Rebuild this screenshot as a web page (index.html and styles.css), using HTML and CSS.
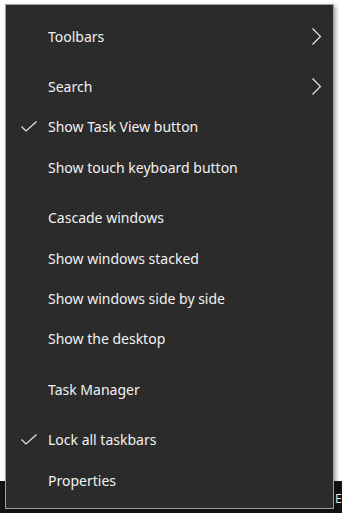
FILE: index.html
```html
<!DOCTYPE html>
<html lang="en">

<head>
    <meta charset="UTF-8">
    <meta name="viewport" content="width=device-width, initial-scale=1.0">
    <title>Taskbar menu</title>
    <link rel="stylesheet" href="styles.css">
</head>

<body>
    <div class="desktop">
        <ul class="menu">
            <li class="item">Toolbars<span class="chev"><svg width="9" height="17" viewBox="0 0 9 17"><path d="M0.5 0.5 L8.5 8.5 L0.5 16.5" fill="none" stroke="#f0f0f0" stroke-width="1.1"/></svg></span></li>
            <li class="sep"></li>
            <li class="item">Search<span class="chev"><svg width="9" height="17" viewBox="0 0 9 17"><path d="M0.5 0.5 L8.5 8.5 L0.5 16.5" fill="none" stroke="#f0f0f0" stroke-width="1.1"/></svg></span></li>
            <li class="item"><span class="check"><svg width="16" height="11" viewBox="0 0 16 11"><path d="M0.5 5.5 L5 10 L15.5 0.5" fill="none" stroke="#e8e8e8" stroke-width="1.1"/></svg></span>Show Task View button</li>
            <li class="item">Show touch keyboard button</li>
            <li class="sep"></li>
            <li class="item">Cascade windows</li>
            <li class="item">Show windows stacked</li>
            <li class="item">Show windows side by side</li>
            <li class="item">Show the desktop</li>
            <li class="sep"></li>
            <li class="item">Task Manager</li>
            <li class="sep"></li>
            <li class="item"><span class="check"><svg width="16" height="11" viewBox="0 0 16 11"><path d="M0.5 5.5 L5 10 L15.5 0.5" fill="none" stroke="#e8e8e8" stroke-width="1.1"/></svg></span>Lock all taskbars</li>
            <li class="item">Properties</li>
        </ul>
        <div class="taskbar">
            <span class="tray">E</span>
        </div>
    </div>
</body>

</html>
```

FILE: styles.css
```css
html, body {
    margin: 0;
    padding: 0;
    background-color: #ffffff;
}

.desktop {
    position: relative;
    width: 342px;
    height: 513px;
    overflow: hidden;
}

.taskbar {
    position: absolute;
    left: 0;
    top: 481px;
    width: 342px;
    height: 32px;
    background-color: #141414;
}

.tray {
    position: absolute;
    left: 335px;
    top: 9px;
    color: #ffffff;
    font-family: "Noto Sans", sans-serif;
    font-size: 12px;
}

/* the context menu itself sits above the taskbar */
.menu {
    position: absolute;
    left: 5px;
    top: 4px;
    z-index: 2;
    width: 329px;
    height: 505px;
    margin: 0;
    padding: 11px 0 6px 0;
    box-sizing: border-box;
    list-style: none;
    background-color: #2b2b2b;
    border: 1px solid #a0a0a0;
    box-shadow: 2px 2px 4px rgba(0, 0, 0, 0.35);
    font-family: "Noto Sans", sans-serif;
    font-size: 14px;
    color: #f2f2f2;
}

.item {
    position: relative;
    display: flex;
    align-items: center;
    height: 40.4px;
    padding-left: 42px;
}

.sep {
    height: 10px;
}

.check {
    position: absolute;
    left: 15px;
    top: 14px;
    line-height: 0;
}

.chev {
    position: absolute;
    left: 306px;
    top: 12px;
    line-height: 0;
}
```
